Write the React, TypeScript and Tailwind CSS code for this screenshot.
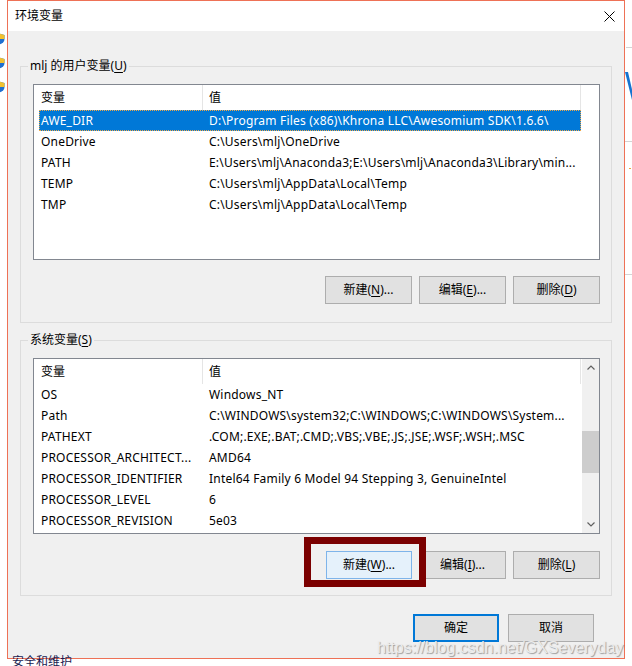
import React from "react";

type Row = { name: string; value: string };

const userVars: Row[] = [
  { name: "AWE_DIR", value: "D:\\Program Files (x86)\\Khrona LLC\\Awesomium SDK\\1.6.6\\" },
  { name: "OneDrive", value: "C:\\Users\\mlj\\OneDrive" },
  { name: "PATH", value: "E:\\Users\\mlj\\Anaconda3;E:\\Users\\mlj\\Anaconda3\\Library\\min..." },
  { name: "TEMP", value: "C:\\Users\\mlj\\AppData\\Local\\Temp" },
  { name: "TMP", value: "C:\\Users\\mlj\\AppData\\Local\\Temp" },
];

const systemVars: Row[] = [
  { name: "OS", value: "Windows_NT" },
  { name: "Path", value: "C:\\WINDOWS\\system32;C:\\WINDOWS;C:\\WINDOWS\\System..." },
  { name: "PATHEXT", value: ".COM;.EXE;.BAT;.CMD;.VBS;.VBE;.JS;.JSE;.WSF;.WSH;.MSC" },
  { name: "PROCESSOR_ARCHITECT...", value: "AMD64" },
  { name: "PROCESSOR_IDENTIFIER", value: "Intel64 Family 6 Model 94 Stepping 3, GenuineIntel" },
  { name: "PROCESSOR_LEVEL", value: "6" },
  { name: "PROCESSOR_REVISION", value: "5e03" },
];

function Shield() {
  return (
    <svg width="11" height="12" viewBox="0 0 11 12">
      <path d="M5.5 0.5 L10.5 2 V6 C10.5 9 8 10.8 5.5 11.5 C3 10.8 0.5 9 0.5 6 V2 Z" fill="#1f6fd0" />
      <path d="M5.5 0.5 L10.5 2 V6 H5.5 Z" fill="#f2c12e" />
      <path d="M5.5 6 H0.5 C0.5 9 3 10.8 5.5 11.5 Z" fill="#f2c12e" />
    </svg>
  );
}

function Btn({
  label,
  keyChar,
  dots,
  hover,
  primary,
  className = "w-[87px]",
}: {
  label: string;
  keyChar?: string;
  dots?: boolean;
  hover?: boolean;
  primary?: boolean;
  className?: string;
}) {
  const look = primary
    ? "border-2 border-[#0078d7] bg-[#e1e1e1]"
    : hover
    ? "border border-[#7eb4ea] bg-[#e5f1fb]"
    : "border border-[#adadad] bg-[#e1e1e1]";
  return (
    <button className={`${className} h-[28px] flex items-center justify-center text-black ${look}`}>
      {label}
      {keyChar && (
        <>
          (<span className="underline underline-offset-2">{keyChar}</span>)
        </>
      )}
      {dots && "..."}
    </button>
  );
}

function Group({ label, children, className }: { label: React.ReactNode; children: React.ReactNode; className: string }) {
  return (
    <div className={`relative ml-[12px] w-[592px] border border-[#dcdcdc] ${className}`}>
      <span className="absolute left-[7px] top-[-9px] bg-[#f0f0f0] px-[2px] leading-[16px]">{label}</span>
      {children}
    </div>
  );
}

function VarList({ rows, selected, scrollbar }: { rows: Row[]; selected?: number; scrollbar?: boolean }) {
  return (
    <div className="ml-[12px] mt-[17px] w-[567px] h-[176px] border border-[#828790] bg-white flex overflow-hidden">
      <div className="flex-1 min-w-0 flex flex-col">
        <div className="h-[25px] shrink-0 flex">
          <div className="w-[169px] h-full pl-[7px] flex items-center border-r border-[#e5e5e5]">变量</div>
          <div className="w-[378px] h-full pl-[6px] flex items-center border-r border-[#e5e5e5]">值</div>
        </div>
        {rows.map((r, i) => (
          <div key={r.name} className="h-[21px] shrink-0 flex">
            <div
              className={`ml-[5px] w-[542px] h-full flex items-center whitespace-nowrap overflow-hidden tracking-[0.2px] border ${
                i === selected ? "bg-[#0078d7] text-white border-dotted border-[#f0a848]" : "border-transparent"
              }`}
            >
              <span className="w-[169px] pl-[1px] shrink-0">{r.name}</span>
              <span>{r.value}</span>
            </div>
          </div>
        ))}
      </div>
      {scrollbar && (
        <div className="w-[17px] h-full bg-[#f0f0f0] flex flex-col shrink-0">
          <div className="h-[17px] flex items-center justify-center">
            <svg width="8" height="5" viewBox="0 0 8 5">
              <polyline points="0.5,4.5 4,1 7.5,4.5" fill="none" stroke="#606060" strokeWidth="1.2" />
            </svg>
          </div>
          <div className="flex-1">
            <div className="mt-[55px] h-[42px] bg-[#cdcdcd]" />
          </div>
          <div className="h-[17px] flex items-center justify-center">
            <svg width="8" height="5" viewBox="0 0 8 5">
              <polyline points="0.5,0.5 4,4 7.5,0.5" fill="none" stroke="#606060" strokeWidth="1.2" />
            </svg>
          </div>
        </div>
      )}
    </div>
  );
}

export default function App() {
  return (
    <div className="relative w-[632px] h-[666px] bg-white overflow-hidden text-[12px] text-black font-['Noto_Sans','Noto_Sans_CJK_SC',sans-serif]">
      {/* desktop behind the dialog */}
      <div className="absolute left-[-6px] top-[33px]"><Shield /></div>
      <div className="absolute left-[-6px] top-[57px]"><Shield /></div>
      <div className="absolute left-[-6px] top-[81px]"><Shield /></div>
      <div className="absolute left-[626px] top-[47px] w-[6px] h-px bg-[#d4d4d4]" />
      <div className="absolute left-[625px] top-[141px] w-[7px] h-px bg-[#d4d4d4]" />
      <div className="absolute left-[625px] top-[274px] w-[7px] h-px bg-[#d4d4d4]" />
      <div className="absolute left-[629px] top-[168px] w-[2px] h-px bg-[#f0a040]" />
      <svg className="absolute left-[625px] top-[72px]" width="8" height="32" viewBox="0 0 8 32">
        <path d="M0 0 L3 0 L8 22 L8 32 Z" fill="#1573d0" />
      </svg>
      <div className="absolute left-[12px] top-[654px] leading-[16px] text-[#1a1a50]">安全和维护</div>

      {/* dialog */}
      <div className="ml-[7px] w-[618px] h-[659px] border border-[#ee7156] bg-[#f0f0f0] flex flex-col">
        <div className="h-[30px] bg-white flex items-center justify-between pl-[7px] pr-[9px] shrink-0">
          <span>环境变量</span>
          <svg width="11" height="11" viewBox="0 0 11 11">
            <path d="M0.5 0.5 L10.5 10.5 M10.5 0.5 L0.5 10.5" stroke="#000" strokeWidth="1" />
          </svg>
        </div>

        <Group
          className="mt-[35px] h-[257px]"
          label={
            <>
              mlj 的用户变量(<span className="underline underline-offset-2">U</span>)
            </>
          }
        >
          <VarList rows={userVars} selected={0} />
          <div className="ml-[12px] mt-[16px] w-[567px] flex justify-end gap-[7px]">
            <Btn label="新建" keyChar="N" dots />
            <Btn label="编辑" keyChar="E" dots />
            <Btn label="删除" keyChar="D" />
          </div>
        </Group>

        <Group
          className="mt-[17px] h-[256px]"
          label={
            <>
              系统变量(<span className="underline underline-offset-2">S</span>)
            </>
          }
        >
          <VarList rows={systemVars} scrollbar />
          <div className="relative ml-[12px] mt-[17px] w-[567px] flex justify-end gap-[7px]">
            <Btn label="新建" keyChar="W" dots hover className="w-[86px]" />
            <Btn label="编辑" keyChar="I" dots />
            <Btn label="删除" keyChar="L" />
            <div className="absolute left-[271px] top-[-14px] w-[122px] h-[50px] border-[7px] border-[#7b0000]" />
          </div>
        </Group>

        <div className="mt-[18px] pr-[30px] flex justify-end gap-[9px]">
          <Btn label="确定" primary className="w-[86px]" />
          <Btn label="取消" className="w-[86px]" />
        </div>
      </div>

      <div className="absolute left-[377px] top-[638px] text-[16px] leading-[20px] font-['Liberation_Sans',sans-serif] text-[#ececec] [text-shadow:1px_1px_1px_rgba(0,0,0,0.35)]">
        https://blog.csdn.net/GXSeveryday
      </div>
    </div>
  );
}
